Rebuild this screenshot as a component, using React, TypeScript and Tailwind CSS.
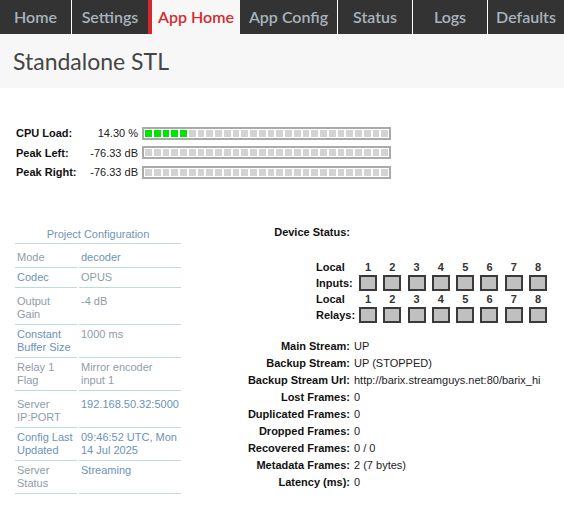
import React from "react";

const navSans = { fontFamily: "Lato, 'Open Sans', sans-serif" };
const arial = { fontFamily: "'Liberation Sans', Arial, sans-serif" };

type Row = {
  label: string[];
  value: string[];
  h: string;
  pt: string;
  lc: string;
  vc: string;
};

const GRAY = "text-[#8e9daa]";
const BLUE = "text-[#6b93ba]";

const rows: Row[] = [
  { label: ["Mode"], value: ["decoder"], h: "h-[24px]", pt: "pt-[7px]", lc: GRAY, vc: BLUE },
  { label: ["Codec"], value: ["OPUS"], h: "h-[20px]", pt: "pt-[3px]", lc: BLUE, vc: GRAY },
  { label: ["Output", "Gain"], value: ["-4 dB"], h: "h-[37px]", pt: "pt-[7px]", lc: GRAY, vc: GRAY },
  { label: ["Constant", "Buffer Size"], value: ["1000 ms"], h: "h-[33px]", pt: "pt-[3px]", lc: BLUE, vc: GRAY },
  { label: ["Relay 1", "Flag"], value: ["Mirror encoder", "input 1"], h: "h-[33px]", pt: "pt-[3px]", lc: GRAY, vc: GRAY },
  { label: ["Server", "IP:PORT"], value: ["192.168.50.32:5000"], h: "h-[37px]", pt: "pt-[7px]", lc: GRAY, vc: BLUE },
  { label: ["Config Last", "Updated"], value: ["09:46:52 UTC, Mon", "14 Jul 2025"], h: "h-[33px]", pt: "pt-[3px]", lc: BLUE, vc: BLUE },
  { label: ["Server", "Status"], value: ["Streaming"], h: "h-[33px]", pt: "pt-[3px]", lc: GRAY, vc: BLUE },
];

const status: [string, string][] = [
  ["Main Stream:", "UP"],
  ["Backup Stream:", "UP (STOPPED)"],
  ["Backup Stream Url:", "http://barix.streamguys.net:80/barix_hi"],
  ["Lost Frames:", "0"],
  ["Duplicated Frames:", "0"],
  ["Dropped Frames:", "0"],
  ["Recovered Frames:", "0 / 0"],
  ["Metadata Frames:", "2 (7 bytes)"],
  ["Latency (ms):", "0"],
];

function Bar({ filled }: { filled: number }) {
  return (
    <div className="ml-[4px] flex h-[13px] w-[249px] gap-[2px] border-2 border-[#aaaaaa] bg-white p-[1px]">
      {Array.from({ length: 28 }).map((_, i) => (
        <div key={i} className={`flex-1 ${i < filled ? "bg-[#00e400]" : "bg-[#d3d3d3]"}`} />
      ))}
    </div>
  );
}

function Metric({ label, value, filled }: { label: string; value: string; filled: number }) {
  return (
    <div className="flex h-[19.5px] items-center">
      <div className="w-[70px] text-[11px] font-bold text-[#111]">{label}</div>
      <div className="w-[52px] text-right text-[11px] text-[#222]">{value}</div>
      <Bar filled={filled} />
    </div>
  );
}

function BoxRow({ label }: { label: string }) {
  return (
    <div className="flex h-[16px] items-center">
      <div className="w-[43px] text-[11px] font-bold leading-[16px] text-[#111]">{label}</div>
      <div className="grid grid-cols-[repeat(8,18px)] gap-x-[6.3px]">
        {Array.from({ length: 8 }).map((_, i) => (
          <div key={i} className="h-[16px] border-2 border-[#3a3a3a] bg-[#c0c0c0]" />
        ))}
      </div>
    </div>
  );
}

function NumRow({ label }: { label: string }) {
  return (
    <div className="flex h-[16px] items-center">
      <div className="w-[43px] text-[11px] font-bold leading-[16px] text-[#111]">{label}</div>
      <div className="grid grid-cols-[repeat(8,18px)] gap-x-[6.3px]">
        {Array.from({ length: 8 }).map((_, i) => (
          <div key={i} className="text-center text-[11px] font-bold leading-[16px] text-[#333]">
            {i + 1}
          </div>
        ))}
      </div>
    </div>
  );
}

export default function App() {
  return (
    <div className="min-h-[522px] w-[564px] bg-white">
      <nav className="flex h-[34px] bg-[#333333] text-[16px] font-semibold text-[#a8b3bd]" style={navSans}>
        <div className="flex w-[71px] items-center justify-center">Home</div>
        <div className="flex w-[77px] items-center justify-center border-l border-white">Settings</div>
        <div className="flex w-[92px] items-center justify-center border-l-4 border-[#d42a2e] bg-[#f7f7f7] text-[#d42a2e]">
          App Home
        </div>
        <div className="flex w-[97px] items-center justify-center">App Config</div>
        <div className="flex w-[75px] items-center justify-center border-l border-white">Status</div>
        <div className="flex w-[75px] items-center justify-center border-l border-white">Logs</div>
        <div className="flex flex-1 items-center justify-center border-l border-white">Defaults</div>
      </nav>

      <header className="h-[54px] bg-[#f7f7f7] px-[13px] pt-[12px]" style={navSans}>
        <h1 className="text-[23px] leading-[30px] text-[#454545]">Standalone STL</h1>
      </header>

      <section className="pl-[16px] pt-[35.5px]" style={arial}>
        <Metric label="CPU Load:" value="14.30 %" filled={5} />
        <Metric label="Peak Left:" value="-76.33 dB" filled={0} />
        <Metric label="Peak Right:" value="-76.33 dB" filled={0} />
      </section>

      <section className="mt-[42px] flex" style={arial}>
        <div className="ml-[15px] w-[166px] text-[11px] leading-[13px]">
          <div className="h-[20px] border-b border-[#bcdcd9] pt-[4px] text-center text-[#7393b5]">
            Project Configuration
          </div>
          {rows.map((r, i) => (
            <div key={i} className={`grid grid-cols-[62px_102px] gap-x-[2px] ${r.h}`}>
              <div className={`border-b border-[#bcdcd9] pl-[2px] ${r.pt} ${r.lc}`}>
                {r.label.map((t, j) => (
                  <div key={j}>{t}</div>
                ))}
              </div>
              <div className={`border-b border-[#bcdcd9] pl-[2px] ${r.pt} ${r.vc}`}>
                {r.value.map((t, j) => (
                  <div key={j}>{t}</div>
                ))}
              </div>
            </div>
          ))}
        </div>

        <div className="flex flex-1 flex-col text-[11px] text-[#111]">
          <div className="flex h-[17px] items-center">
            <div className="w-[169px] text-right font-bold">Device Status:</div>
          </div>
          <div className="ml-[135px] mt-[18px] flex flex-col">
            <NumRow label="Local" />
            <BoxRow label="Inputs:" />
            <NumRow label="Local" />
            <BoxRow label="Relays:" />
          </div>
          <div className="mt-[15px] flex flex-col">
            {status.map(([l, v]) => (
              <div key={l} className="flex h-[17px] items-center">
                <div className="w-[169px] text-right font-bold">{l}</div>
                <div className="whitespace-nowrap pl-[4px] text-[#222]">{v}</div>
              </div>
            ))}
          </div>
        </div>
      </section>
    </div>
  );
}
